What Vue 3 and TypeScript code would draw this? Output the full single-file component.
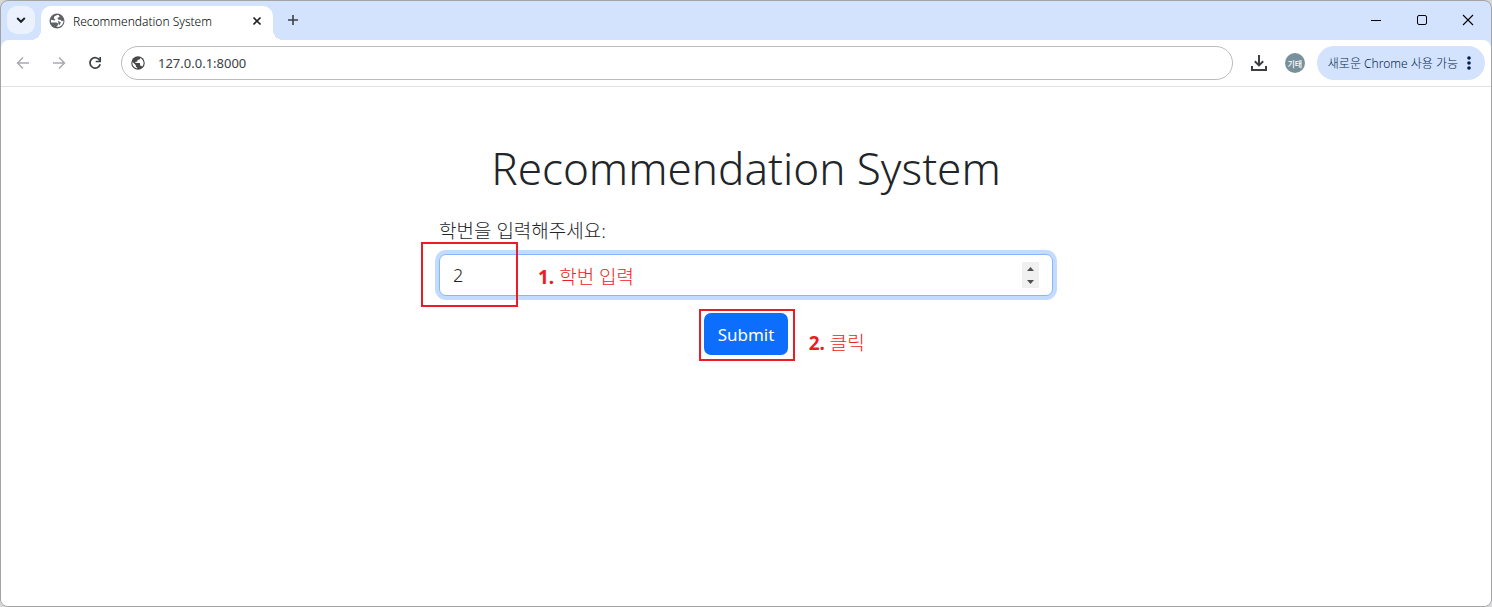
<script setup lang="ts">
import { ref } from 'vue'

const title = 'Recommendation System'
const address = ref('127.0.0.1:8000')
const studentId = ref(2)
</script>

<template>
  <div class="window">
    <header class="tabstrip">
      <button class="tab-search" type="button" aria-label="Search tabs">
        <svg width="10" height="10" viewBox="0 0 10 10"><path d="M1.200 3l3.800 3.800L8.800 3" fill="none" stroke="#202124" stroke-width="2" /></svg>
      </button>
      <div class="tab">
        <svg width="16" height="16" viewBox="0 0 16 16">
          <circle cx="8" cy="8" r="7.500" fill="#5f6368" />
          <path d="M9.500 2l1.200 1.700-2.200 1.200.4 1.500 2.900.5 1 1.300 1.700-.4c.1 2.900-2 5.400-4.800 6.100l-2.500-.3 1.600-1.200.3-1.800-1.800-1.200H2C1.800 8.400 1.900 7.500 2.200 6.700l3.600.8.6-.7-1.500-1.400.3-1.900C6.400 2.500 8 1.900 9.500 2z" fill="#fff" />
          <path d="M9.200 7.800l2.500 1.500-.8 2.600-1.500-.6z" fill="#5f6368" />
        </svg>
        <span class="tab-title">{{ title }}</span>
        <button class="plain close-tab" type="button" aria-label="Close tab">
          <svg width="10" height="10" viewBox="0 0 10 10"><path d="M1.500 1.500l7 7M8.500 1.500l-7 7" stroke="#202124" stroke-width="1.700" /></svg>
        </button>
      </div>
      <button class="plain new-tab" type="button" aria-label="New tab">
        <svg width="12" height="12" viewBox="0 0 12 12"><path d="M6 1v10M1 6h10" stroke="#3c4043" stroke-width="1.600" /></svg>
      </button>
      <div class="caption">
        <button class="plain" type="button" aria-label="Minimize">
          <svg width="12" height="12" viewBox="0 0 12 12"><path d="M1 6.500h10" stroke="#000" /></svg>
        </button>
        <button class="plain" type="button" aria-label="Maximize">
          <svg width="12" height="12" viewBox="0 0 12 12"><rect x="1.500" y="1.500" width="9" height="9" rx="1.500" fill="none" stroke="#000" /></svg>
        </button>
        <button class="plain" type="button" aria-label="Close">
          <svg width="12" height="12" viewBox="0 0 12 12"><path d="M1 1l10 10M11 1L1 11" stroke="#000" stroke-width="1.100" /></svg>
        </button>
      </div>
    </header>

    <nav class="toolbar">
      <button class="plain nav-button" type="button" aria-label="Back">
        <svg width="14" height="14" viewBox="0 0 14 14"><path d="M13 7H2M7 1.500L1.500 7 7 12.500" fill="none" stroke="#a9abae" stroke-width="1.500" /></svg>
      </button>
      <button class="plain nav-button" type="button" aria-label="Forward">
        <svg width="14" height="14" viewBox="0 0 14 14"><path d="M1 7h11M7 1.500L12.500 7 7 12.500" fill="none" stroke="#a9abae" stroke-width="1.500" /></svg>
      </button>
      <button class="plain nav-button" type="button" aria-label="Reload">
        <svg width="14" height="14" viewBox="0 0 14 14">
          <path d="M11.700 4.300A5.200 5.200 0 1 0 12.200 8.300" fill="none" stroke="#3c4043" stroke-width="1.700" />
          <path d="M12.200 1v4.500H7.700" fill="none" stroke="#3c4043" stroke-width="1.700" />
        </svg>
      </button>
      <div class="omnibox">
        <svg width="14" height="14" viewBox="0 0 16 16">
          <circle cx="8" cy="8" r="7.700" fill="#474747" />
          <path d="M1.900 6.900l3.600 3.600v.8c0 .8.700 1.500 1.500 1.500v1.400C3.800 13.700 1.600 11.200 1.600 8c0-.4.100-.8.300-1.100zM12.600 12.200c-.2-.6-.8-1.100-1.500-1.100h-.7V8.800c0-.4-.3-.8-.8-.8H5.100V6.500h1.500c.4 0 .8-.4.800-.8V4.200h1.500c.8 0 1.500-.7 1.500-1.500v-.5c2.300.9 4 3.200 4 5.800 0 1.600-.7 3.100-1.800 4.200z" fill="#fff" />
        </svg>
        <input v-model="address" class="address" type="text" aria-label="Address" spellcheck="false" />
      </div>
      <button class="plain download" type="button" aria-label="Downloads">
        <svg width="18" height="18" viewBox="0 0 18 18">
          <path d="M9 1v10M4.800 7.200L9 11.400l4.200-4.200M2 12v4h14v-4" fill="none" stroke="#3c4043" stroke-width="2" />
        </svg>
      </button>
      <button class="plain avatar" type="button">기태</button>
      <button class="plain update" type="button">
        <span>새로운 Chrome 사용 가능</span>
        <svg width="4" height="16" viewBox="0 0 4 16"><g fill="#041e49"><circle cx="2" cy="3" r="1.800" /><circle cx="2" cy="8" r="1.800" /><circle cx="2" cy="13" r="1.800" /></g></svg>
      </button>
    </nav>

    <main class="page">
      <h1>{{ title }}</h1>
      <form class="form" @submit.prevent>
        <label for="student-id">학번을 입력해주세요:</label>
        <div class="field">
          <input id="student-id" v-model.number="studentId" type="number" />
          <div class="stepper">
            <button class="plain" type="button" aria-label="Increase" @click="studentId++">
              <svg width="7" height="4" viewBox="0 0 7 4"><path d="M0 4l3.500-4L7 4z" fill="#505050" /></svg>
            </button>
            <button class="plain" type="button" aria-label="Decrease" @click="studentId--">
              <svg width="7" height="4" viewBox="0 0 7 4"><path d="M0 0l3.500 4L7 0z" fill="#505050" /></svg>
            </button>
          </div>
          <span class="mark mark-field"></span>
          <span class="note note-field"><b>1.</b> 학번 입력</span>
        </div>
        <div class="action">
          <button class="submit" type="submit">Submit</button>
          <span class="mark mark-submit"></span>
          <span class="note note-submit"><b>2.</b> 클릭</span>
        </div>
      </form>
    </main>
  </div>
</template>

<style>
body {
  background: #d8d8d8;
}
</style>

<style scoped>
.window,
.window * {
  box-sizing: border-box;
}
.window {
  min-height: 100vh;
  display: flex;
  flex-direction: column;
  overflow: hidden;
  border: 1px solid #a3a3a3;
  border-radius: 8px;
  background: #d3e3fd;
  color: #212529;
  font-family: "Noto Sans", "Noto Sans CJK KR", sans-serif;
  font-weight: 300;
}
button,
input {
  font: inherit;
  color: inherit;
}
svg {
  display: block;
  flex: none;
}
.plain {
  display: flex;
  align-items: center;
  justify-content: center;
  padding: 0;
  border: 0;
  background: none;
}
.tabstrip {
  display: flex;
  height: 39px;
  padding-left: 6px;
}
.tab-search {
  display: flex;
  align-items: center;
  justify-content: center;
  width: 28px;
  height: 28px;
  margin: 5px 6px 0 0;
  padding: 0;
  border: 0;
  border-radius: 10px;
  background: #ebf2fe;
}
.tab {
  position: relative;
  display: flex;
  align-items: center;
  width: 232px;
  margin-top: 5px;
  padding: 0 10px 4px 8px;
  border-radius: 10px 10px 0 0;
  background: #fff;
}
.tab::before,
.tab::after {
  content: "";
  position: absolute;
  bottom: 0;
  width: 10px;
  height: 10px;
}
.tab::before {
  right: 100%;
  background: radial-gradient(circle at 0 0, transparent 10px, #fff 10px);
}
.tab::after {
  left: 100%;
  background: radial-gradient(circle at 100% 0, transparent 10px, #fff 10px);
}
.tab-title {
  flex: 1;
  margin-left: 8px;
  color: #000;
  font-size: 12px;
  white-space: nowrap;
}
.close-tab {
  width: 12px;
  height: 16px;
}
.new-tab {
  width: 40px;
  height: 38px;
}
.caption {
  display: flex;
  margin-left: auto;
}
.caption .plain {
  width: 46px;
  height: 38px;
}
.toolbar {
  display: flex;
  align-items: center;
  height: 47px;
  padding: 0 6px 0 4px;
  border-bottom: 1px solid #dfe1e5;
  border-radius: 8px 8px 0 0;
  background: #fff;
}
.nav-button {
  width: 36px;
  height: 34px;
}
.omnibox {
  flex: 1;
  display: flex;
  align-items: center;
  gap: 13px;
  height: 34px;
  margin-left: 8px;
  padding: 0 9px;
  border: 1px solid #b9bbbe;
  border-radius: 17px;
}
.address {
  flex: 1;
  min-width: 0;
  padding: 0;
  border: 0;
  outline: 0;
  background: none;
  color: #3c4043;
  font-size: 13px;
  font-weight: 400;
}
.download {
  width: 36px;
  height: 34px;
  margin-left: 8px;
}
.avatar {
  width: 20px;
  height: 20px;
  margin: 0 12px 0 8px;
  border-radius: 50%;
  background: #78909c;
  color: #fff;
  font-size: 8px;
  font-weight: 500;
}
.update {
  gap: 9px;
  height: 34px;
  padding: 0 14px 0 11px;
  border-radius: 17px;
  background: #d3e3fd;
  color: #041e49;
  font-size: 12px;
  white-space: nowrap;
}
.page {
  flex: 1;
  padding: 54px 16px 24px;
  background: #fff;
}
h1 {
  margin: 0 0 23px;
  font-size: 44px;
  font-weight: 300;
  line-height: 54px;
  text-align: center;
}
.form {
  max-width: 614px;
  margin: 0 auto;
  font-size: 18px;
  line-height: 27px;
}
label {
  display: block;
  margin-bottom: 9px;
  font-size: 19px;
}
.field {
  position: relative;
}
#student-id {
  display: block;
  width: 100%;
  height: 42px;
  padding: 7px 13px;
  border: 1px solid #86b7fe;
  border-radius: 7px;
  outline: 0;
  background: #fff;
  box-shadow: 0 0 0 4px #c2dbff;
  appearance: textfield;
}
.stepper {
  position: absolute;
  top: 8px;
  right: 14px;
  display: flex;
  flex-direction: column;
  width: 17px;
  height: 26px;
  background: #f0f0f0;
}
.stepper .plain {
  flex: 1;
}
.action {
  position: relative;
  width: fit-content;
  margin: 17px auto 0;
}
.submit {
  display: block;
  height: 42px;
  padding: 0 14px;
  border: 0;
  border-radius: 7px;
  background: #0d6efd;
  color: #fff;
  font-size: 17px;
  font-weight: 400;
}
.mark {
  position: absolute;
  border: 2px solid #ed1c24;
  pointer-events: none;
}
.mark-field {
  top: -12px;
  left: -18px;
  width: 97px;
  height: 65px;
}
.mark-submit {
  inset: -4px -7px -6px -5px;
}
.note {
  position: absolute;
  color: #ed1c24;
  font-size: 19px;
  white-space: nowrap;
  pointer-events: none;
}
.note b {
  font-weight: 700;
}
.note-field {
  top: 10px;
  left: 99px;
}
.note-submit {
  top: 17px;
  left: 105px;
}
</style>
